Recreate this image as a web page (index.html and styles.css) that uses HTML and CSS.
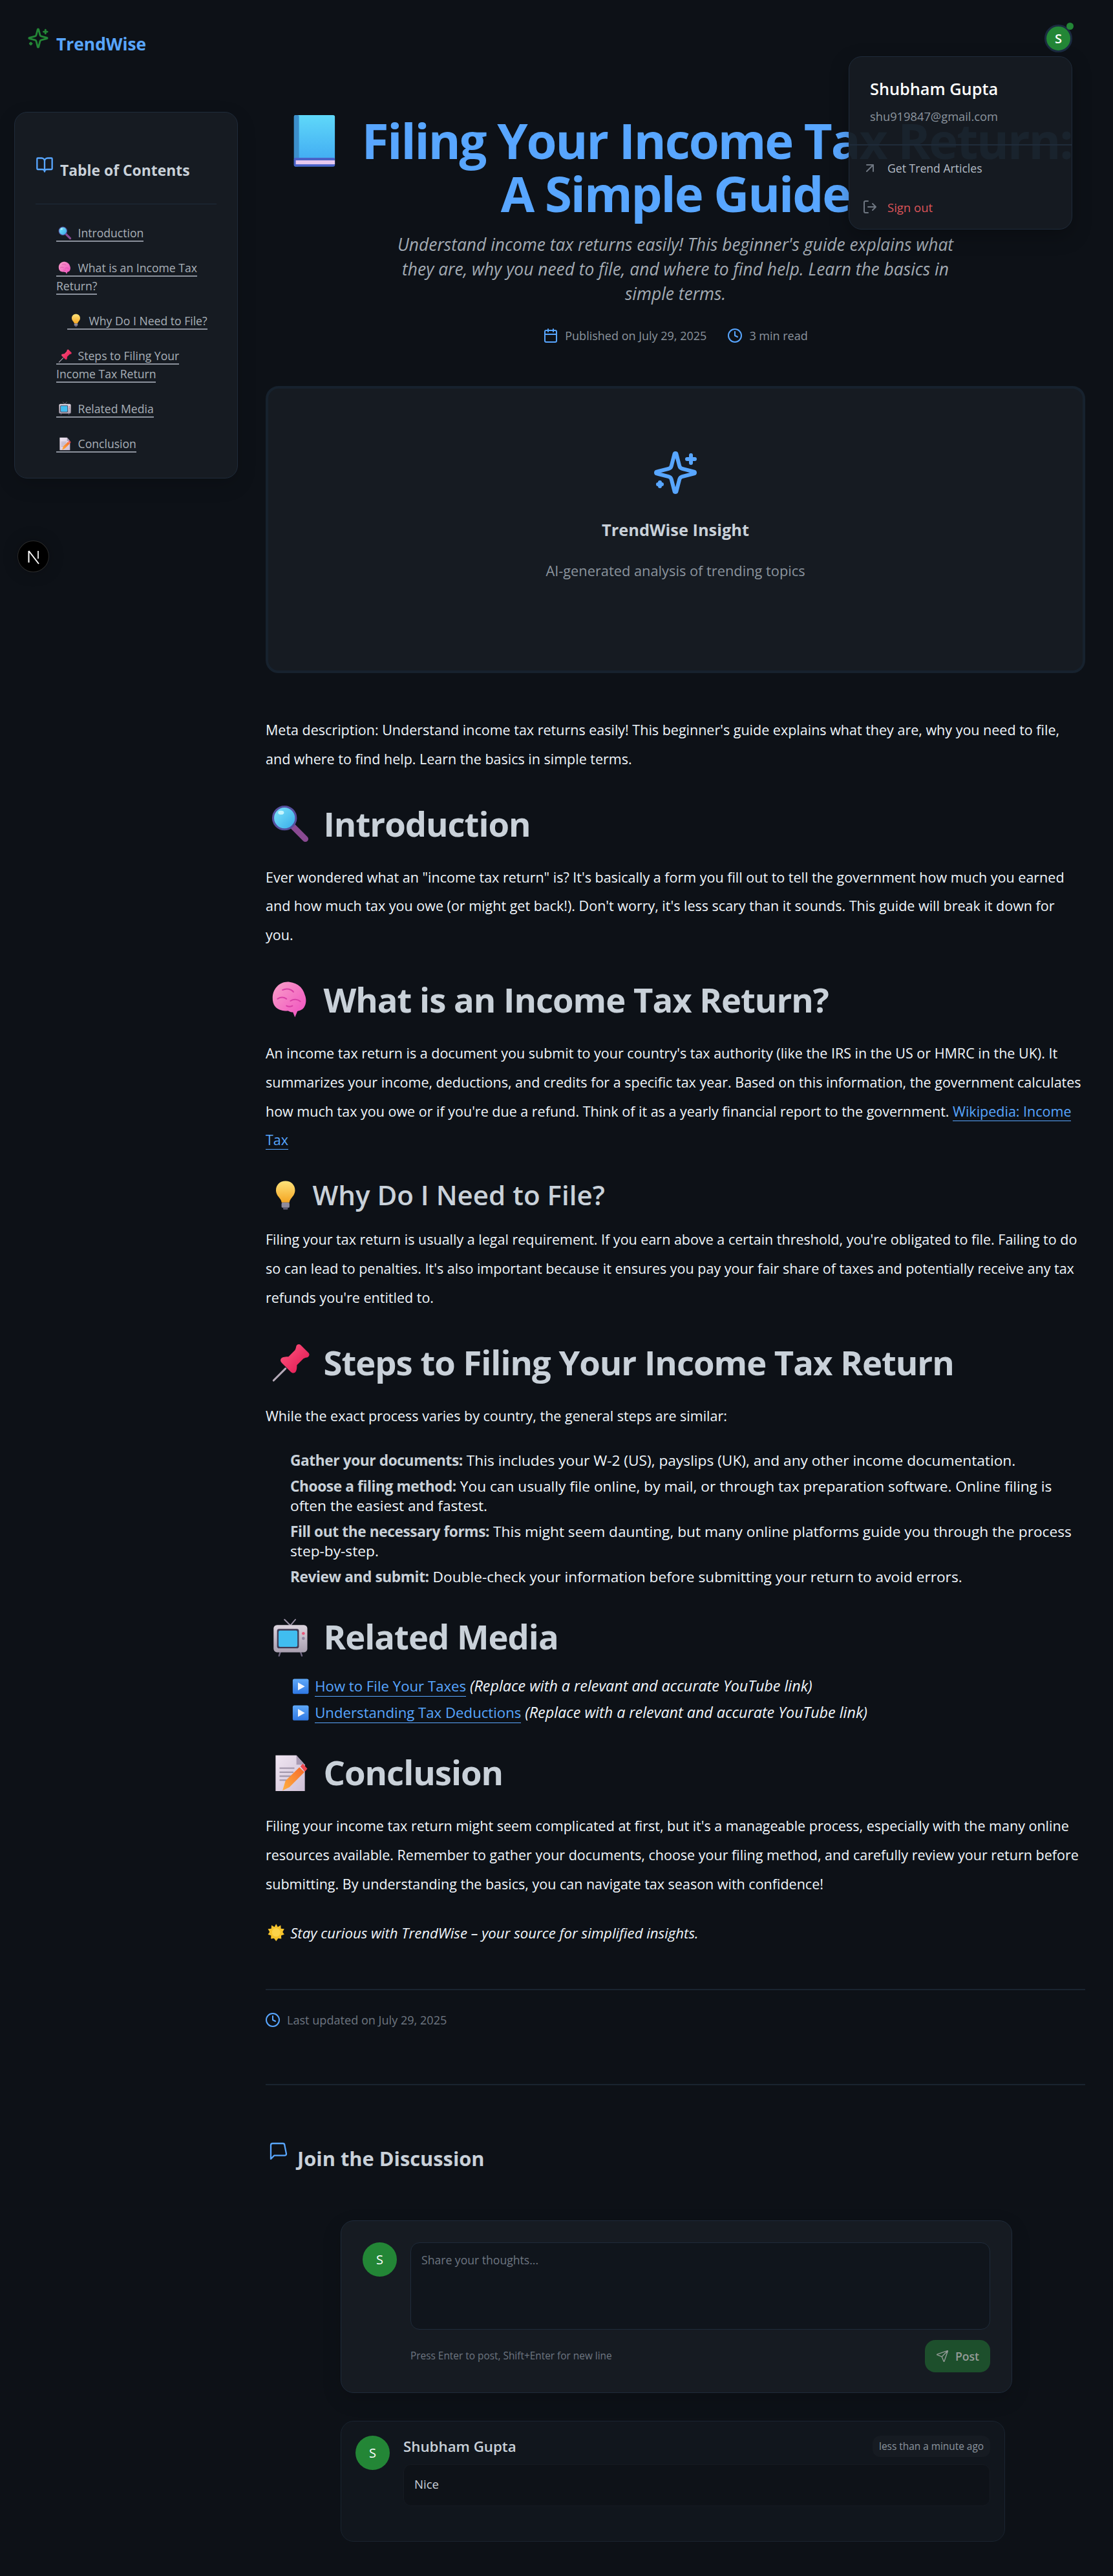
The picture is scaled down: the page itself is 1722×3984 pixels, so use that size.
FILE: index.html
```html
<!doctype html>
<html lang="en">
<head>
<meta charset="utf-8">
<title>Filing Your Income Tax Return: A Simple Guide</title>
<link rel="stylesheet" href="styles.css">
</head>
<body>
<svg class="defs" aria-hidden="true">
  <defs>
    <linearGradient id="g-book" x1="0" y1="0" x2="0" y2="1"><stop offset="0" stop-color="#5fd8f9"/><stop offset="1" stop-color="#3ea6f2"/></linearGradient>
    <linearGradient id="g-lens" x1="0" y1="0" x2="1" y2="1"><stop offset="0" stop-color="#7fe6fb"/><stop offset="1" stop-color="#35a9e8"/></linearGradient>
    <linearGradient id="g-brain" x1="0" y1="0" x2="1" y2="1"><stop offset="0" stop-color="#f9a0c8"/><stop offset="1" stop-color="#f04ec0"/></linearGradient>
    <linearGradient id="g-bulb" x1="0" y1="0" x2="0" y2="1"><stop offset="0" stop-color="#fde27a"/><stop offset="1" stop-color="#f5a623"/></linearGradient>
    <linearGradient id="g-pin" x1="0" y1="0" x2="1" y2="1"><stop offset="0" stop-color="#ff5a80"/><stop offset="1" stop-color="#e0124f"/></linearGradient>
    <linearGradient id="g-tv" x1="0" y1="0" x2="0" y2="1"><stop offset="0" stop-color="#dcd4de"/><stop offset="1" stop-color="#a9a0b0"/></linearGradient>
    <linearGradient id="g-paper" x1="0" y1="0" x2="1" y2="1"><stop offset="0" stop-color="#f0e6f2"/><stop offset="1" stop-color="#cfc0d6"/></linearGradient>
    <linearGradient id="g-pencil" x1="0" y1="1" x2="1" y2="0"><stop offset="0" stop-color="#ffb040"/><stop offset="1" stop-color="#f56a2a"/></linearGradient>
    <linearGradient id="g-play" x1="0" y1="0" x2="0" y2="1"><stop offset="0" stop-color="#5fa8f8"/><stop offset="1" stop-color="#2f78e4"/></linearGradient>
  </defs>
  <symbol id="e-book" viewBox="0 0 100 100">
    <rect x="21.5" y="14.5" width="57" height="71.5" rx="2.5" fill="url(#g-book)"/>
    <rect x="21.5" y="14.5" width="7" height="71.5" rx="2" fill="#3c8fcb"/>
    <rect x="21.5" y="74" width="57" height="12" rx="2" fill="#4a62c8"/>
    <rect x="24" y="77.5" width="54.5" height="5.5" fill="#e6c9ef"/>
  </symbol>
  <symbol id="e-search" viewBox="0 0 100 100">
    <path d="M56 56 80 80" stroke="#8a4a92" stroke-width="12" stroke-linecap="round"/>
    <circle cx="38" cy="38" r="23" fill="url(#g-lens)" stroke="#56509e" stroke-width="4"/>
    <ellipse cx="31" cy="27" rx="6" ry="4" fill="#c6f4fd"/>
  </symbol>
  <symbol id="e-brain" viewBox="0 0 100 100">
    <path d="M48 14C30 12 14 26 14 46c0 14 6 22 18 25 5 1 9 2 13 1 3 2 7 3 10 3l4 10 5-12c8-2 13-5 15-11 3-7 3-15 0-22C75 25 64 16 48 14Z" fill="url(#g-brain)"/>
    <path d="M34 30c8-4 18-2 22 4M24 48c6-4 12-4 18 0M50 52c6-4 14-4 20 1M42 62c4 2 8 2 12 0" fill="none" stroke="#d93fa6" stroke-width="2.5" stroke-linecap="round"/>
  </symbol>
  <symbol id="e-bulb" viewBox="0 0 100 100">
    <path d="M50 14c-14 0-24 10-24 23 0 9 5 15 10 21 3 4 4 7 4 10h20c0-3 1-6 4-10 5-6 10-12 10-21 0-13-10-23-24-23Z" fill="url(#g-bulb)"/>
    <rect x="40" y="68" width="20" height="13" rx="3" fill="#8e8a9c"/>
    <rect x="44" y="81" width="12" height="5" rx="2" fill="#5e5a70"/>
  </symbol>
  <symbol id="e-pin" viewBox="0 0 100 100">
    <path d="M40 62 16 86" stroke="#b5aab8" stroke-width="4" stroke-linecap="round"/>
    <path d="M70 14c-3-2-6-1-8 2-1 3-1 6-3 9L46 38c-5 0-12 0-15 4-2 3-1 6 2 9l17 17c3 3 6 4 9 2 4-3 4-10 4-15l13-13c3-2 6-2 9-3 3-2 4-5 2-8Z" fill="url(#g-pin)"/>
  </symbol>
  <symbol id="e-tv" viewBox="0 0 100 100">
    <path d="M50 26 38 14M50 26 60 14" stroke="#9a90a4" stroke-width="2.5" stroke-linecap="round"/>
    <path d="M30 78l-3 9M70 78l3 9" stroke="#6e6480" stroke-width="3" stroke-linecap="round"/>
    <rect x="16" y="25" width="68" height="55" rx="7" fill="url(#g-tv)"/>
    <rect x="23" y="33" width="44" height="39" rx="4" fill="#3f3a54"/>
    <rect x="26" y="36" width="38" height="33" rx="3" fill="#40bdf0"/>
    <circle cx="76" cy="42" r="3" fill="#e8587a"/>
    <circle cx="76" cy="52" r="3" fill="#8e84a0"/>
  </symbol>
  <symbol id="e-memo" viewBox="0 0 100 100">
    <path d="M20 14h42l17 19v53H20Z" fill="url(#g-paper)"/>
    <path d="M62 14v19h17Z" fill="#a99bb4"/>
    <path d="M28 40h30M28 48h28M28 56h24M28 64h18" stroke="#a59aae" stroke-width="3"/>
    <path d="M34 85 40 65 68 38 78 48 48 78Z" fill="url(#g-pencil)"/>
    <path d="M70 36l5-5 9 10-5 6Z" fill="#f0484f"/>
  </symbol>
  <symbol id="e-play" viewBox="0 0 100 100">
    <rect x="12" y="14" width="76" height="72" rx="8" fill="url(#g-play)"/>
    <path d="M37 31 70 50 37 69Z" fill="#f2f6fc"/>
  </symbol>
  <symbol id="e-sun" viewBox="0 0 100 100">
    <path d="M50 8l8 14 14-8 1 16 16 2-8 14 8 12-15 5 1 16-15-3-10 14-10-14-15 3 1-16-15-5 8-12-8-14 16-2 1-16 14 8Z" fill="#f6c32c"/>
    <circle cx="50" cy="48" r="20" fill="#fcd34a"/>
  </symbol>
  <symbol id="i-sparkles" viewBox="0 0 24 24">
    <path d="M9.937 15.5A2 2 0 0 0 8.5 14.063l-6.135-1.582a.5.5 0 0 1 0-.962L8.5 9.936A2 2 0 0 0 9.937 8.5l1.582-6.135a.5.5 0 0 1 .963 0L14.063 8.5A2 2 0 0 0 15.5 9.937l6.135 1.581a.5.5 0 0 1 0 .964L15.5 14.063a2 2 0 0 0-1.437 1.437l-1.582 6.135a.5.5 0 0 1-.963 0zM20 3v4M22 5h-4M4 17v2M5 18H3"/>
  </symbol>
  <symbol id="i-clock" viewBox="0 0 24 24"><circle cx="12" cy="12" r="10"/><path d="M12 6v6l4 2"/></symbol>
</svg>

<header class="topbar">
  <a class="logo">
    <svg class="ico logo-ico"><use href="#i-sparkles"/></svg>
    <span class="logo-text">TrendWise</span>
  </a>
  <div class="user-avatar">S<span class="user-dot"></span></div>
</header>

<aside class="user-menu">
  <div class="user-head">
    <div class="user-name">Shubham Gupta</div>
    <div class="user-mail">shu919847@gmail.com</div>
  </div>
  <div class="menu-list">
    <a class="menu-item"><svg class="ico menu-ico" viewBox="0 0 24 24"><path d="M7 7h10v10M7 17 17 7"/></svg>Get Trend Articles</a>
    <a class="menu-item danger"><svg class="ico menu-ico" viewBox="0 0 24 24"><path d="M9 21H5a2 2 0 0 1-2-2V5a2 2 0 0 1 2-2h4M16 17l5-5-5-5M21 12H9"/></svg>Sign out</a>
  </div>
</aside>

<div class="next-badge">
  <svg width="26" height="26" viewBox="0 0 26 26" aria-label="Next.js"><path d="M5.5 22V4M5.5 4 21 24" fill="none" stroke="#fff" stroke-width="2"/><path d="M20 4v12" fill="none" stroke="#d8d8d8" stroke-width="2"/></svg>
</div>

<div class="layout">
  <nav class="toc">
    <div class="toc-title">
      <svg class="ico toc-ico" viewBox="0 0 24 24"><path d="M12 7v14M3 18a1 1 0 0 1-1-1V4a1 1 0 0 1 1-1h5a4 4 0 0 1 4 4 4 4 0 0 1 4-4h5a1 1 0 0 1 1 1v13a1 1 0 0 1-1 1h-6a3 3 0 0 0-3 3 3 3 0 0 0-3-3z"/></svg>
      <span>Table of Contents</span>
    </div>
    <ul class="toc-list">
      <li><a><svg class="em" role="img" aria-label="🔍"><use href="#e-search"/></svg> Introduction</a></li>
      <li><a><svg class="em" role="img" aria-label="🧠"><use href="#e-brain"/></svg> What is an Income Tax Return?</a></li>
      <li class="sub"><a><svg class="em" role="img" aria-label="💡"><use href="#e-bulb"/></svg> Why Do I Need to File?</a></li>
      <li><a><svg class="em" role="img" aria-label="📌"><use href="#e-pin"/></svg> Steps to Filing Your Income Tax Return</a></li>
      <li><a><svg class="em" role="img" aria-label="📺"><use href="#e-tv"/></svg> Related Media</a></li>
      <li><a><svg class="em" role="img" aria-label="📝"><use href="#e-memo"/></svg> Conclusion</a></li>
    </ul>
  </nav>

  <main class="main">
    <h1 class="title"><svg class="em" role="img" aria-label="📘"><use href="#e-book"/></svg> Filing Your Income Tax Return: A Simple Guide</h1>
    <p class="subtitle">Understand income tax returns easily! This beginner's guide explains what they are, why you need to file, and where to find help. Learn the basics in simple terms.</p>
    <div class="meta">
      <span class="meta-item"><svg class="ico blue" viewBox="0 0 24 24"><path d="M8 2v4M16 2v4"/><rect x="3" y="4" width="18" height="18" rx="2"/><path d="M3 10h18"/></svg>Published on July 29, 2025</span>
      <span class="meta-item"><svg class="ico blue"><use href="#i-clock"/></svg>3 min read</span>
    </div>

    <section class="hero">
      <svg class="ico hero-ico"><use href="#i-sparkles"/></svg>
      <div class="hero-title">TrendWise Insight</div>
      <div class="hero-sub">AI-generated analysis of trending topics</div>
    </section>

    <article class="article">
      <p>Meta description: Understand income tax returns easily! This beginner's guide explains what they are, why you need to file, and where to find help. Learn the basics in simple terms.</p>
      <h2><svg class="em" role="img" aria-label="🔍"><use href="#e-search"/></svg> Introduction</h2>
      <p>Ever wondered what an "income tax return" is? It's basically a form you fill out to tell the government how much you earned and how much tax you owe (or might get back!). Don't worry, it's less scary than it sounds. This guide will break it down for you.</p>
      <h2><svg class="em" role="img" aria-label="🧠"><use href="#e-brain"/></svg> What is an Income Tax Return?</h2>
      <p>An income tax return is a document you submit to your country's tax authority (like the IRS in the US or HMRC in the UK). It summarizes your income, deductions, and credits for a specific tax year. Based on this information, the government calculates how much tax you owe or if you're due a refund. Think of it as a yearly financial report to the government. <a class="link">Wikipedia: Income Tax</a></p>
      <h3><svg class="em" role="img" aria-label="💡"><use href="#e-bulb"/></svg> Why Do I Need to File?</h3>
      <p>Filing your tax return is usually a legal requirement. If you earn above a certain threshold, you're obligated to file. Failing to do so can lead to penalties. It's also important because it ensures you pay your fair share of taxes and potentially receive any tax refunds you're entitled to.</p>
      <h2><svg class="em" role="img" aria-label="📌"><use href="#e-pin"/></svg> Steps to Filing Your Income Tax Return</h2>
      <p>While the exact process varies by country, the general steps are similar:</p>
      <ul class="steps">
        <li><strong>Gather your documents:</strong> This includes your W-2 (US), payslips (UK), and any other income documentation.</li>
        <li><strong>Choose a filing method:</strong> You can usually file online, by mail, or through tax preparation software. Online filing is often the easiest and fastest.</li>
        <li><strong>Fill out the necessary forms:</strong> This might seem daunting, but many online platforms guide you through the process step-by-step.</li>
        <li><strong>Review and submit:</strong> Double-check your information before submitting your return to avoid errors.</li>
      </ul>
      <h2><svg class="em" role="img" aria-label="📺"><use href="#e-tv"/></svg> Related Media</h2>
      <ul class="media">
        <li><svg class="em" role="img" aria-label="▶️"><use href="#e-play"/></svg> <a class="link">How to File Your Taxes</a> <em>(Replace with a relevant and accurate YouTube link)</em></li>
        <li><svg class="em" role="img" aria-label="▶️"><use href="#e-play"/></svg> <a class="link">Understanding Tax Deductions</a> <em>(Replace with a relevant and accurate YouTube link)</em></li>
      </ul>
      <h2><svg class="em" role="img" aria-label="📝"><use href="#e-memo"/></svg> Conclusion</h2>
      <p>Filing your income tax return might seem complicated at first, but it's a manageable process, especially with the many online resources available. Remember to gather your documents, choose your filing method, and carefully review your return before submitting. By understanding the basics, you can navigate tax season with confidence!</p>
      <p class="closing"><svg class="em" role="img" aria-label="🌟"><use href="#e-sun"/></svg> <em>Stay curious with TrendWise – your source for simplified insights.</em></p>
    </article>

    <div class="updated">
      <svg class="ico blue"><use href="#i-clock"/></svg>
      <span>Last updated on July 29, 2025</span>
    </div>

    <section class="discussion">
      <div class="disc-title">
        <svg class="ico disc-ico" viewBox="0 0 24 24"><path d="M21 15a2 2 0 0 1-2 2H7l-4 4V5a2 2 0 0 1 2-2h12a2 2 0 0 1 2 2z"/></svg>
        <h2 class="disc-text">Join the Discussion</h2>
      </div>
      <form class="comment-form">
        <div class="avatar">S</div>
        <div class="form-body">
          <textarea class="input" placeholder="Share your thoughts..."></textarea>
          <div class="form-foot">
            <span class="hint">Press Enter to post, Shift+Enter for new line</span>
            <button class="post" type="button"><svg class="ico post-ico" viewBox="0 0 24 24"><path d="M14.536 21.686a.5.5 0 0 0 .937-.024l6.5-19a.496.496 0 0 0-.635-.635l-19 6.5a.5.5 0 0 0-.024.937l7.93 3.18a2 2 0 0 1 1.112 1.11zM21.854 2.147l-10.94 10.939"/></svg>Post</button>
          </div>
        </div>
      </form>
      <div class="comment">
        <div class="avatar">S</div>
        <div class="comment-body">
          <div class="comment-head">
            <span class="comment-name">Shubham Gupta</span>
            <span class="comment-time">less than a minute ago</span>
          </div>
          <div class="comment-text">Nice</div>
        </div>
      </div>
    </section>
  </main>
</div>
</body>
</html>
```
FILE: styles.css
```css
* { box-sizing: border-box; }
html, body { margin: 0; padding: 0; }
body {
  position: relative;
  background: #0d1117;
  color: #f0f6fc;
  font-family: "Open Sans", "Noto Sans", sans-serif;
  min-height: 3984px;
}
.defs { position: absolute; width: 0; height: 0; overflow: hidden; }
.ico { fill: none; stroke: currentColor; stroke-width: 2; stroke-linecap: round; stroke-linejoin: round; flex: none; width: 24px; height: 24px; }
.blue { color: #58a6ff; }
.em { display: inline-block; width: 1.46em; height: 1.46em; vertical-align: 0.37em; margin-block: -0.73em; }

/* top bar */
.topbar { height: 173px; display: flex; justify-content: space-between; align-items: flex-start; padding: 38px 63px 0 42px; }
.logo { display: flex; gap: 11px; margin-top: 4px; }
.logo-ico { width: 34px; height: 34px; color: #238636; }
.logo-text { font-size: 26.4px; font-weight: 700; line-height: 36px; margin-top: 8px; color: #58a6ff; }
.user-avatar {
  position: relative; width: 43px; height: 43px; border-radius: 50%;
  background: #238636; border: 3px solid #1b2b41; color: #fff;
  display: flex; align-items: center; justify-content: center;
  font-size: 20px; font-weight: 600;
}
.user-dot { position: absolute; top: -6px; right: -5px; width: 11px; height: 11px; border-radius: 50%; background: #238636; }

/* user menu overlay */
.user-menu {
  position: absolute; top: 87px; right: 63px; width: 346px; height: 268px; z-index: 5;
  background: rgba(22, 27, 34, .95); border: 1px solid #1f2b3a; border-radius: 20px;
  box-shadow: 0 10px 30px rgba(0, 0, 0, .25);
}
.user-head { padding: 33px 32px 29px; border-bottom: 2px solid #1f2b3a; }
.user-name { font-size: 25.3px; font-weight: 600; line-height: 32px; color: #fff; }
.user-mail { font-size: 18.3px; line-height: 28px; margin-top: 13px; color: #8b949e; }
.menu-list { padding-top: 5px; }
.menu-item { display: flex; align-items: center; gap: 15px; height: 60px; padding-left: 20px; font-size: 17.6px; color: #b4bcc6; }
.menu-ico { color: #6e7681; }
.danger { font-size: 18.5px; color: #dc5459; }

/* next badge */
.next-badge {
  position: absolute; left: 28px; top: 837px; width: 47px; height: 47px; border-radius: 50%;
  background: #000; box-shadow: 0 0 0 1px #2a2a2a, 0 0 24px rgba(0, 0, 0, .25);
  display: flex; align-items: center; justify-content: center;
}

/* layout */
.layout { display: flex; align-items: flex-start; padding-left: 22px; }

/* table of contents */
.toc {
  width: 346px; flex: none; padding: 67px 32px 38px;
  background: #161b22; border: 1px solid #1f2b3a; border-radius: 20px;
  box-shadow: 0 10px 30px rgba(0, 0, 0, .15);
}
.toc-title { display: flex; gap: 10px; padding-bottom: 35px; border-bottom: 1px solid #1f2b3a; font-size: 22.9px; font-weight: 700; line-height: 32px; color: #c9d1d9; }
.toc-title span { margin-top: 7px; }
.toc-ico { width: 28px; height: 28px; color: #58a6ff; }
.toc-list { list-style: none; margin: 31px 0 0; padding: 0 0 0 32px; font-size: 17.6px; line-height: 27.2px; }
.toc-list li + li { margin-top: 27.2px; }
.toc-list .sub { padding-left: 17px; }
.toc-list a { color: #a8b0b8; border-bottom: 2px solid #8b919c; }
.toc-list .em { width: 27px; height: 27px; vertical-align: 7px; margin-block: -13.5px; margin-right: 2px; }

/* main */
.main { width: 1268px; margin-left: 43px; flex: none; }
.title {
  margin: 3px 0 0; text-align: center; color: #58a6ff;
  font-size: 76px; font-weight: 700; line-height: 82px; letter-spacing: -2.05px;
}
.subtitle { max-width: 896px; margin: 19px auto 0; text-align: center; font-size: 26.4px; font-style: italic; line-height: 38px; color: #a3abb4; }
.meta { display: flex; justify-content: center; gap: 32px; margin-top: 32px; font-size: 18px; line-height: 28px; color: #8b949e; }
.meta-item { display: flex; align-items: center; gap: 10px; }

.hero {
  height: 444px; margin-top: 64px; padding-top: 94px;
  display: flex; flex-direction: column; align-items: center;
  background: #161b22; border: 4px solid #17222e; border-radius: 20px;
}
.hero-ico { width: 72px; height: 72px; color: #58a6ff; stroke-width: 2; }
.hero-title { margin-top: 35px; font-size: 25.4px; font-weight: 700; line-height: 34px; color: #c9d1d9; }
.hero-sub { margin-top: 32px; font-size: 21.8px; line-height: 30px; color: #8b949e; }

/* article */
.article { margin-top: 66px; padding-bottom: 63px; border-bottom: 2px solid #1a2430; font-size: 21.5px; line-height: 44.8px; }
.article p { margin: 0; }
.article h2 { margin: 45px 0 29px; font-size: 52.6px; font-weight: 700; letter-spacing: -1px; line-height: 64px; color: #c9d1d9; }
.article h3 { margin: 35px 0 20px; font-size: 42.1px; font-weight: 600; line-height: 54px; color: #c9d1d9; }
.link { color: #58a6ff; border-bottom: 1.5px solid #58a6ff; }
.steps, .media { list-style: none; margin: 0; padding: 0 0 0 38px; font-size: 22.7px; line-height: 30px; }
.steps { margin-top: 32px; }
.steps li + li, .media li + li { margin-top: 10px; }
.steps strong { font-weight: 700; letter-spacing: -0.4px; color: #c9d1d9; }
.media { font-size: 22.2px; }
.media em { font-size: 23.3px; }
.closing { margin-top: 31px !important; font-size: 22.2px; }

.updated { display: flex; align-items: center; gap: 10px; margin-top: 34px; margin-left: -1px; padding-bottom: 87px; font-size: 18.1px; line-height: 24px; color: #6e7681; }
.discussion { border-top: 2px solid #1a2430; padding-top: 86px; padding-bottom: 53px; }
.disc-title { display: flex; gap: 13px; }
.disc-ico { width: 32px; height: 32px; margin-left: 4px; color: #58a6ff; stroke-width: 1.7; }
.disc-text { margin: 6px 0 0; font-size: 30.8px; font-weight: 700; line-height: 42px; color: #c9d1d9; }

.comment-form {
  display: flex; gap: 21px; width: 1039px; height: 267px; margin: 75px 0 0 116px; padding: 33px;
  background: #161b22; border: 1px solid #1f2b3a; border-radius: 20px;
  box-shadow: 0 10px 30px rgba(0, 0, 0, .15);
}
.avatar {
  flex: none; width: 53px; height: 53px; border-radius: 50%; background: #238636; color: #fff;
  display: flex; align-items: center; justify-content: center; font-size: 20px;
}
.form-body { flex: 1; min-width: 0; }
.input {
  display: block; width: 100%; height: 135px; padding: 13px 16px; resize: none; outline: none;
  background: #10151c; border: 1px solid #1f2b3a; border-radius: 14px;
  font-family: inherit; font-size: 17.6px; line-height: 26px; color: #c9d1d9;
}
.input::placeholder { color: #6e7681; opacity: 1; }
.form-foot { display: flex; justify-content: space-between; align-items: center; margin-top: 16px; }
.hint { font-size: 15.4px; color: #6e7681; }
.post {
  display: flex; align-items: center; gap: 10px; width: 101px; height: 50px; padding: 0 0 0 17px;
  background: #1d4f2c; border: 0; border-radius: 16px;
  font-family: inherit; font-size: 17.6px; font-weight: 600; color: #949b97;
}
.post-ico { width: 20px; height: 20px; stroke-width: 1.7; }

.comment {
  display: flex; gap: 21px; width: 1028px; height: 187px; margin: 43px 0 0 116px; padding: 22px 22px 0;
  background: #11161d; border: 1px solid #1a2430; border-radius: 20px;
}
.comment-body { flex: 1; min-width: 0; }
.comment-head { display: flex; justify-content: space-between; align-items: flex-start; }
.comment-name { font-size: 22.3px; font-weight: 600; line-height: 34px; color: #c9d1d9; }
.comment-time { height: 33px; padding: 0 10px; background: #161b22; border-radius: 12px; font-size: 15.4px; line-height: 33px; color: #8b949e; }
.comment-text { height: 65px; margin-top: 10px; padding: 0 16px; background: #0e1218; border: 1px solid #161b22; border-radius: 12px; font-size: 18.6px; line-height: 60px; color: #c9d1d9; }
```
